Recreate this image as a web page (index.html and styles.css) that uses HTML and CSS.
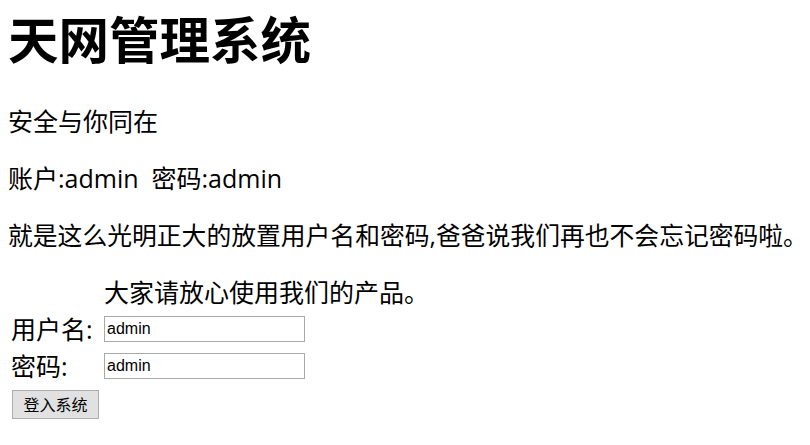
FILE: index.html
```html
<!DOCTYPE html>
<html lang="zh-CN">
<head>
<meta charset="utf-8">
<title>天网管理系统</title>
<link rel="stylesheet" href="styles.css">
</head>
<body>
<h1 class="title">天网管理系统</h1>
<p class="line">安全与你同在</p>
<p class="line">账户:admin&nbsp;&nbsp;密码:admin</p>
<p class="line long">就是这么光明正大的放置用户名和密码,爸爸说我们再也不会忘记密码啦。</p>
<form class="login">
  <span class="cell"></span>
  <span class="cell note">大家请放心使用我们的产品。</span>
  <label class="cell label">用户名:</label>
  <span class="cell field"><input class="input" type="text" value="admin"></span>
  <label class="cell label">密码:</label>
  <span class="cell field"><input class="input" type="text" value="admin"></span>
  <span class="cell btn-cell"><button class="btn" type="button">登入系统</button></span>
</form>
</body>
</html>
```
FILE: styles.css
```css
html, body {
  margin: 0;
  padding: 0;
  background: #ffffff;
}
body {
  padding: 8px;
  color: #000000;
  font-family: "Open Sans", "Noto Sans CJK SC", sans-serif;
}
.title {
  margin: 0;
  font-size: 50.5px;
  line-height: 58px;
  font-weight: bold;
  font-family: "Noto Sans CJK SC", sans-serif;
}
.line {
  margin: 0 0 25px;
  font-size: 25px;
  line-height: 32px;
}
.long {
  white-space: nowrap;
  font-size: 24.8px;
}
.title + .line {
  margin-top: 39px;
}
.login {
  display: grid;
  grid-template-columns: 93px 1fr;
  row-gap: 5px;
  margin: 4px 0 0 3px;
  font-size: 25px;
  line-height: 32px;
}
.label {
  display: block;
}
.field {
  display: flex;
  align-items: center;
}
.input {
  box-sizing: border-box;
  width: 201px;
  height: 26px;
  margin: 0;
  padding: 1px 2px;
  border: 1px solid #a9a9a9;
  font-family: "Liberation Sans", Arial, sans-serif;
  font-size: 16px;
  color: #000;
  background: #fff;
}
.btn-cell {
  grid-column: 1 / 2;
  margin-top: 3px;
  display: flex;
}
.btn {
  box-sizing: border-box;
  height: 29px;
  width: 87px;
  padding: 0;
  margin-left: 1px;
  border: 1px solid #adadad;
  background: #e1e1e1;
  font-family: "Noto Sans CJK SC", sans-serif;
  font-size: 16px;
  line-height: 27px;
  color: #000;
}
```
